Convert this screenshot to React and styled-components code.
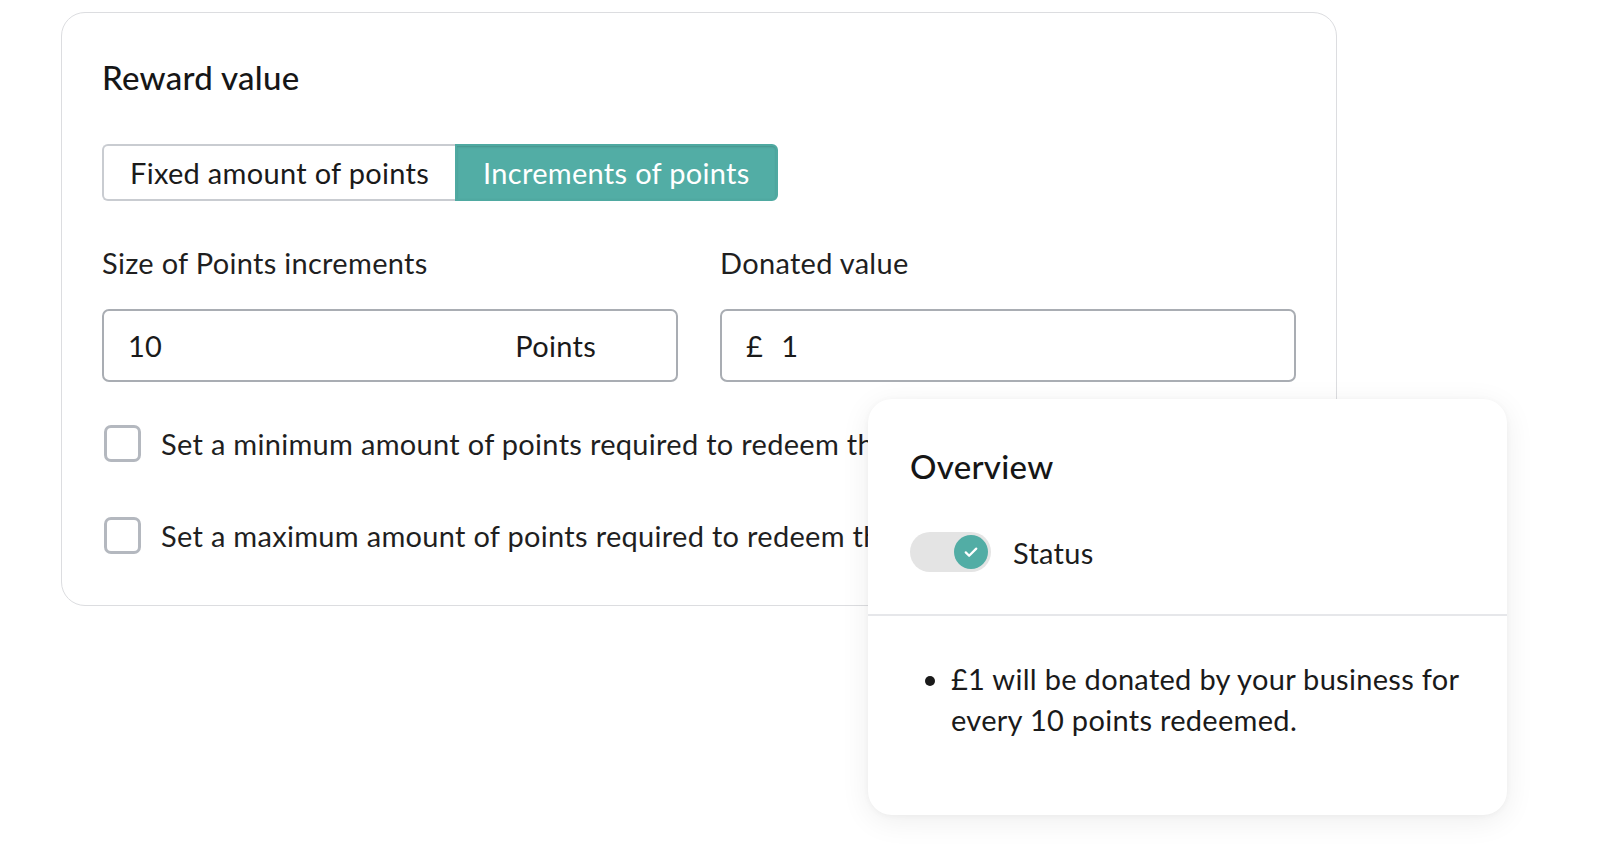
import React from 'react';
import styled, { createGlobalStyle } from 'styled-components';

const GlobalStyle = createGlobalStyle`
  html, body {
    margin: 0;
    background: #ffffff;
  }
  body {
    font-family: Lato, "Noto Sans", sans-serif;
    color: #1c1c1c;
    letter-spacing: 0.3px;
  }
`;

const Page = styled.div`
  padding: 12px 0 0 61px;
  width: 1600px;
  height: 862px;
  box-sizing: border-box;
`;

const Stage = styled.div`
  position: relative;
  width: 1276px;
`;

const Card = styled.div`
  box-sizing: border-box;
  width: 1276px;
  height: 594px;
  border: 1px solid #dcdde0;
  border-radius: 24px;
  padding: 45px 40px 0 40px;
  background: #fff;
`;

const Title = styled.h2`
  margin: 0;
  font-size: 33px;
  line-height: 38px;
  font-weight: 500;
  color: #161616;
`;

const Segmented = styled.div`
  display: inline-flex;
  margin-top: 48px;
  height: 57px;
`;

const SegButton = styled.button`
  box-sizing: border-box;
  height: 57px;
  padding: 0 26px;
  font-family: inherit;
  letter-spacing: inherit;
  font-size: 29px;
  border: 2px solid ${(p) => (p.active ? '#4fa9a1' : '#c9ccd1')};
  background: ${(p) => (p.active ? '#52ada5' : '#fff')};
  color: ${(p) => (p.active ? '#fff' : '#1a1a1a')};
  border-radius: ${(p) => (p.first ? '6px 0 0 6px' : '0 6px 6px 0')};
  border-right-width: ${(p) => (p.first ? '0' : '2px')};
  box-shadow: ${(p) => (p.active ? 'inset 0 1px 2px rgba(0,0,0,0.15)' : 'none')};
`;

const FieldGrid = styled.div`
  display: grid;
  grid-template-columns: 576px 576px;
  column-gap: 42px;
  margin-top: 45px;
`;

const Field = styled.div`
  display: flex;
  flex-direction: column;
`;

const Label = styled.label`
  font-size: 29px;
  line-height: 34px;
  color: #1f1f1f;
`;

const InputBox = styled.div`
  box-sizing: border-box;
  margin-top: 29px;
  height: 73px;
  border: 2px solid #a9adb3;
  border-radius: 7px;
  display: flex;
  align-items: center;
  padding: 0 ${(p) => p.padRight || 24}px 0 ${(p) => p.padLeft || 24}px;
  font-size: 29px;
  color: #1a1a1a;
`;

const Value = styled.span`
  flex: 1;
`;

const Prefix = styled.span`
  margin-right: 18px;
`;

/* the overview card covers the end of these rows, so they are cut at its edge */
const CheckRow = styled.div`
  display: flex;
  align-items: center;
  gap: 20px;
  width: 764px;
  overflow: hidden;
  height: 40px;
  margin-top: ${(p) => p.gap}px;
  padding-left: 2px;
  font-size: 29px;
  white-space: nowrap;
  color: #1f1f1f;
`;

const CheckBox = styled.span`
  box-sizing: border-box;
  width: 37px;
  height: 37px;
  border: 3px solid #b4b8bf;
  border-radius: 7px;
  flex-shrink: 0;
`;

const Overview = styled.div`
  position: absolute;
  left: 807px;
  top: 387px;
  width: 639px;
  height: 416px;
  background: #fff;
  border-radius: 24px;
  box-shadow: 0 6px 30px rgba(0, 0, 0, 0.07), 0 1px 6px rgba(0, 0, 0, 0.04);
  display: flex;
  flex-direction: column;
`;

const OverviewTop = styled.div`
  padding: 48px 42px 0 42px;
  height: 217px;
  box-sizing: border-box;
  border-bottom: 2px solid #e6e7ea;
`;

const OverviewTitle = styled.h3`
  margin: 0;
  font-size: 33px;
  line-height: 38px;
  font-weight: 500;
  color: #161616;
`;

const StatusRow = styled.div`
  display: flex;
  align-items: center;
  gap: 22px;
  margin-top: 47px;
  font-size: 29px;
`;

const Toggle = styled.span`
  display: flex;
  align-items: center;
  justify-content: flex-end;
  box-sizing: border-box;
  width: 81px;
  height: 40px;
  border-radius: 20px;
  background: #e4e4e4;
  padding-right: 3px;
`;

const Knob = styled.span`
  display: flex;
  align-items: center;
  justify-content: center;
  width: 34px;
  height: 34px;
  border-radius: 50%;
  background: #52ada5;
`;

const List = styled.ul`
  margin: 0;
  padding: 42px 40px 0 83px;
  font-size: 29px;
  line-height: 41px;
  color: #1a1a1a;
`;

export default function App() {
  return (
    <Page>
      <GlobalStyle />
      <Stage>
        <Card>
          <Title>Reward value</Title>
          <Segmented>
            <SegButton first>Fixed amount of points</SegButton>
            <SegButton active>Increments of points</SegButton>
          </Segmented>
          <FieldGrid>
            <Field>
              <Label>Size of Points increments</Label>
              <InputBox padRight={80}>
                <Value>10</Value>
                <span>Points</span>
              </InputBox>
            </Field>
            <Field>
              <Label>Donated value</Label>
              <InputBox padLeft={24}>
                <Prefix>£</Prefix>
                <Value>1</Value>
              </InputBox>
            </Field>
          </FieldGrid>
          <CheckRow gap={41}>
            <CheckBox />
            Set a minimum amount of points required to redeem this reward
          </CheckRow>
          <CheckRow gap={52}>
            <CheckBox />
            Set a maximum amount of points required to redeem this reward
          </CheckRow>
        </Card>
        <Overview>
          <OverviewTop>
            <OverviewTitle>Overview</OverviewTitle>
            <StatusRow>
              <Toggle>
                <Knob>
                  <svg width="18" height="18" viewBox="0 0 24 24" fill="none" stroke="#fff" strokeWidth="3" strokeLinecap="round" strokeLinejoin="round">
                    <path d="M5 12.5l4.5 4.5L19 7.5" />
                  </svg>
                </Knob>
              </Toggle>
              Status
            </StatusRow>
          </OverviewTop>
          <List>
            <li>£1 will be donated by your business for every 10 points redeemed.</li>
          </List>
        </Overview>
      </Stage>
    </Page>
  );
}
